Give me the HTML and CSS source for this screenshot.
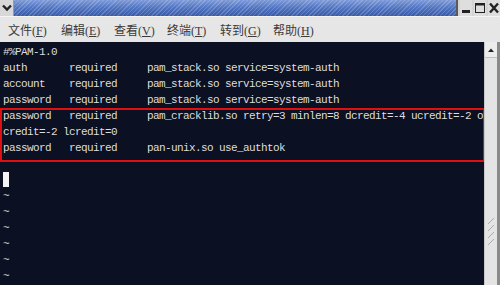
FILE: index.html
```html
<!DOCTYPE html>
<html>
<head>
<meta charset="utf-8">
<link rel="stylesheet" href="styles.css">
</head>
<body>
<div class="window">
  <div class="titlebar">
    <div class="menu-btn">
      <svg width="10" height="8" viewBox="0 0 10 8"><path d="M1 1.5 L5 5.5 L9 1.5" fill="none" stroke="#222" stroke-width="2.4"/></svg>
    </div>
    <div class="title"></div>
    <div class="tb-btns">
      <div class="tb-btn"><svg width="12" height="14" viewBox="0 0 12 14"><rect x="2" y="9" width="8" height="3" fill="#222"/></svg></div>
      <div class="tb-btn"><svg width="12" height="14" viewBox="0 0 12 14"><rect x="1.5" y="2.5" width="9" height="9" fill="none" stroke="#222" stroke-width="1"/><rect x="1.5" y="2.5" width="9" height="2" fill="#222"/></svg></div>
      <div class="tb-btn"><svg width="12" height="14" viewBox="0 0 12 14"><path d="M2 2.5 L10 11.5 M10 2.5 L2 11.5" stroke="#222" stroke-width="2.4"/></svg></div>
    </div>
  </div>
  <div class="menubar">
    <span class="menu-item">文件(<u>F</u>)</span>
    <span class="menu-item">编辑(<u>E</u>)</span>
    <span class="menu-item">查看(<u>V</u>)</span>
    <span class="menu-item">终端(<u>T</u>)</span>
    <span class="menu-item">转到(<u>G</u>)</span>
    <span class="menu-item">帮助(<u>H</u>)</span>
  </div>
  <div class="main">
    <div class="term">
<pre class="lines">#%PAM-1.0
auth       required     pam_stack.so service=system-auth
account    required     pam_stack.so service=system-auth
password   required     pam_stack.so service=system-auth
password   required     pam_cracklib.so retry=3 minlen=8 dcredit=-4 ucredit=-2 o
credit=-2 lcredit=0
password   required     pan-unix.so use_authtok

<span class="cursor"> </span>
~
~
~
~
~
~</pre>
      <div class="highlight"></div>
    </div>
    <div class="scrollbar">
      <div class="sb-up"><svg width="8" height="6" viewBox="0 0 8 6"><path d="M1 5 L4 1.5 L7 5 Z" fill="#222"/></svg></div>
      <div class="sb-track">
        <div class="grip">
          <svg width="8" height="30" viewBox="0 0 8 30"><path d="M1 9 L7 3 M1 16 L7 10 M1 23 L7 17 M1 30 L7 24" stroke="#aaa" stroke-width="1"/></svg>
        </div>
      </div>
    </div>
    <div class="edge"></div>
  </div>
</div>
</body>
</html>
```

FILE: styles.css
```css
html, body {
  margin: 0;
  padding: 0;
  width: 500px;
  height: 285px;
  overflow: hidden;
  background: #0b1022;
}

.window {
  width: 500px;
  height: 285px;
  display: flex;
  flex-direction: column;
}

.titlebar {
  height: 16px;
  display: flex;
  background: #d6d6d6;
}

.menu-btn {
  width: 14px;
  height: 16px;
  display: flex;
  align-items: center;
  justify-content: center;
  background: #d8d8d8;
  border-right: 1px solid #9a9a9a;
  box-sizing: border-box;
}

.title {
  flex: 1;
  background:
    repeating-linear-gradient(135deg, rgba(255,255,255,0.18) 0 1px, rgba(255,255,255,0) 1px 3px),
    linear-gradient(180deg, #7f9bd8 0%, #5478c4 45%, #3a5aa6 100%);
  border-right: 2px solid #5a5a5a;
}

.tb-btns {
  display: flex;
  gap: 2px;
  padding-left: 2px;
  background: #d4d4d4;
}

.tb-btn {
  width: 12px;
  height: 16px;
  display: flex;
  align-items: center;
  justify-content: center;
  background: #dedede;
}

.menubar {
  height: 26px;
  display: flex;
  align-items: center;
  gap: 15px;
  padding-left: 8px;
  background: #e6e6e6;
  border-top: 1px solid #f4f4f4;
  box-sizing: border-box;
  font-family: "Noto Sans CJK SC", "Liberation Serif", serif;
  font-size: 12px;
  color: #3a3a3a;
}

.menu-item {
  width: 38px;
  white-space: nowrap;
  font-family: "Liberation Serif", "Noto Sans CJK SC", serif;
}

.menu-item u {
  text-decoration: underline;
  text-underline-offset: 1px;
}

.main {
  flex: 1;
  display: flex;
  min-height: 0;
}

.term {
  flex: 1;
  position: relative;
  background: #0b1022;
  padding: 2px 0 0 3px;
  overflow: hidden;
}

.lines {
  margin: 0;
  font-family: "Liberation Mono", "DejaVu Sans Mono", monospace;
  font-size: 11px;
  letter-spacing: -0.6px;
  line-height: 16px;
  color: #dedede;
}

.cursor {
  display: inline-block;
  width: 6px;
  height: 15px;
  vertical-align: top;
  background: #f4f4f4;
}

.highlight {
  position: absolute;
  left: 0;
  top: 66px;
  width: 485px;
  height: 54px;
  border: 2px solid #e01010;
  box-sizing: border-box;
}

.scrollbar {
  width: 12px;
  display: flex;
  flex-direction: column;
  background: #e4e4e4;
  border-left: 1px solid #c8c8c8;
}

.sb-up {
  height: 15px;
  display: flex;
  align-items: center;
  justify-content: center;
  border-bottom: 1px solid #c0c0c0;
  background: #ececec;
}

.sb-track {
  flex: 1;
  display: flex;
  align-items: flex-end;
  justify-content: center;
  padding-bottom: 40px;
}

.grip {
  height: 30px;
}

.edge {
  width: 3px;
  background: #8a8a8a;
}
```
